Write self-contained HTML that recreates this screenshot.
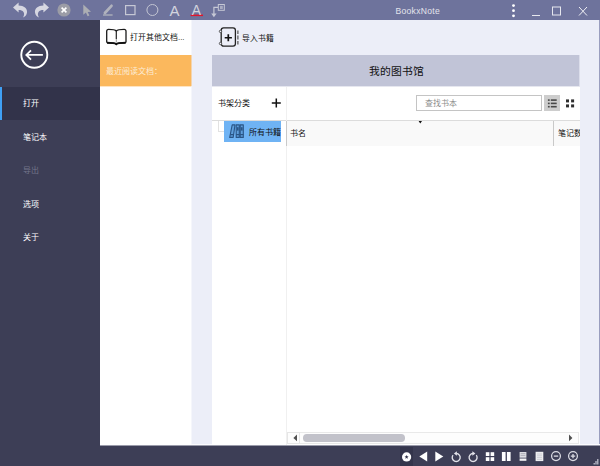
<!DOCTYPE html>
<html lang="zh-CN">
<head>
<meta charset="utf-8">
<title>BookxNote</title>
<style>
html,body{margin:0;padding:0;}
body{width:600px;height:466px;overflow:hidden;position:relative;background:#eceef8;font-family:"Liberation Sans",sans-serif;font-size:8px;color:#111;}
.abs{position:absolute;}
.t{position:absolute;white-space:nowrap;line-height:10px;height:10px;}
#topbar{left:0;top:0;width:600px;height:20px;background:#6e739c;}
#side{left:0;top:20px;width:100px;height:446px;background:#3d3e56;}
#bottom{left:0;top:446px;width:600px;height:20px;background:#3d3e56;}
#sel{left:0;top:87px;width:100px;height:33px;background:#32334a;}
#selbar{left:0;top:87px;width:2px;height:33px;background:#3fa0f5;}
.nav{color:#fff;left:22.5px;}
#panel2{left:100px;top:20px;width:91px;height:426px;background:#fff;}
#orange{left:100px;top:55px;width:91px;height:31px;background:#fbb85d;}
#main{left:212px;top:86px;width:368px;height:360px;background:#fff;}
#hdr{left:212px;top:55px;width:367px;height:31px;background:#c1c4d7;border-right:1px solid #dcdeeb;}
</style>
</head>
<body>
<div id="topbar" class="abs"></div>
<div id="side" class="abs"></div>
<div id="bottom" class="abs"></div>
<div id="sel" class="abs"></div>
<div id="selbar" class="abs"></div>

<div class="abs" style="left:599px;top:20px;width:1px;height:426px;background:#9a9ebf;"></div>
<div class="abs" style="left:100px;top:444.4px;width:500px;height:1.6px;background:#fbfbfe;"></div>
<!-- title bar icons -->
<svg class="abs" style="left:0;top:0" width="600" height="20" viewBox="0 0 600 20">
  <!-- undo -->
  <path d="M13 7.6 L18.6 2.6 L18.6 5.5 C24 5.5 27.5 8.5 27 12.5 C26.7 15 25 16.8 23 17.5 C24.3 15.5 24.5 13.5 23.5 12 C22.5 10.6 20.8 10.1 18.6 10.1 L18.6 12.6 Z" fill="#d6d7e1"/>
  <!-- redo -->
  <path d="M49 7.6 L43.4 2.6 L43.4 5.5 C38 5.5 34.5 8.5 35 12.5 C35.3 15 37 16.8 39 17.5 C37.7 15.5 37.5 13.5 38.5 12 C39.5 10.6 41.2 10.1 43.4 10.1 L43.4 12.6 Z" fill="#d6d7e1"/>
  <!-- close circle -->
  <circle cx="64" cy="10" r="6.6" fill="#9b9ca6"/>
  <path d="M61.6 7.6 L66.4 12.4 M66.4 7.6 L61.6 12.4" stroke="#fff" stroke-width="1.6"/>
  <!-- cursor -->
  <path d="M83.3 4.4 L83.3 14.8 L85.9 12.6 L87.6 16.3 L89.4 15.5 L87.7 12 L91 11.8 Z" fill="#acaeb3"/>
  <!-- pen -->
  <path d="M103 15 L112.6 15" stroke="#a9abb8" stroke-width="1.5"/>
  <path d="M104.9 13 L111.5 5.8" stroke="#b0b2bd" stroke-width="2.7" stroke-linecap="round"/>
  <!-- rect -->
  <rect x="125.6" y="5.6" width="9.4" height="9" fill="none" stroke="#c6c8d5" stroke-width="1.2"/>
  <!-- circle -->
  <circle cx="152.4" cy="10" r="5.5" fill="none" stroke="#c3c5d3" stroke-width="1"/>
  <!-- red underline -->
  <rect x="190.6" y="14.6" width="12.4" height="1.5" fill="#e2142c"/>
  <!-- arrow box -->
  <path d="M213.9 14.5 L213.9 7.3 L218 7.3" fill="none" stroke="#c6c8d5" stroke-width="1.2"/>
  <path d="M211.2 13.4 L213.9 17.2 L216.6 13.4 Z" fill="#c6c8d5"/>
  <rect x="218.3" y="4.5" width="6" height="5.8" fill="none" stroke="#c6c8d5" stroke-width="1"/>
  <rect x="220" y="5.8" width="2.8" height="3.2" fill="#a9acc2"/>
  <!-- kebab -->
  <circle cx="513.5" cy="5.6" r="1.4" fill="#fff"/>
  <circle cx="513.5" cy="10.7" r="1.4" fill="#fff"/>
  <circle cx="513.5" cy="15.8" r="1.4" fill="#fff"/>
  <!-- min -->
  <rect x="532" y="15" width="8" height="1" fill="#e6e7ee"/>
  <!-- max -->
  <rect x="552.5" y="7" width="8" height="8" fill="none" stroke="#e6e7ee" stroke-width="1"/>
  <!-- close -->
  <path d="M579 7 L587 15.5 M587 7 L579 15.5" stroke="#f0f0f5" stroke-width="1"/>
</svg>
<div class="t" style="left:169.4px;top:3px;font-size:15px;line-height:16px;height:16px;color:#d3d4de;">A</div>
<div class="t" style="left:191.8px;top:4.2px;font-size:13.8px;line-height:14px;height:14px;color:#d3d4de;">A</div>
<div class="t" style="left:395.5px;top:5.5px;font-size:8.6px;letter-spacing:0.27px;color:#e3e4ec;">BookxNote</div>

<!-- sidebar -->
<svg class="abs" style="left:18px;top:38px" width="34" height="34" viewBox="0 0 34 34">
  <circle cx="16.3" cy="16.8" r="13" fill="none" stroke="#fff" stroke-width="1.9"/>
  <path d="M8.4 16.9 L24.9 16.9 M13 12.3 L8.3 16.9 L13 21.6" fill="none" stroke="#fff" stroke-width="1.8"/>
</svg>
<div class="t nav" style="top:99.4px;">打开</div>
<div class="t nav" style="top:133px;">笔记本</div>
<div class="t nav" style="top:166px;color:#74758b;">导出</div>
<div class="t nav" style="top:199.5px;">选项</div>
<div class="t nav" style="top:233px;">关于</div>

<!-- panel 2 -->
<div id="panel2" class="abs"></div>
<div id="orange" class="abs"></div>
<svg class="abs" style="left:104px;top:27px" width="26" height="20" viewBox="0 0 26 20">
  <path d="M12.3 4 C11 2.5 9 2.4 4.6 2.4 Q2.7 2.4 2.7 4.2 L2.7 14.8 Q2.7 15.9 4 15.9 C8 15.9 11 15.9 12.3 17.2 C13.6 15.9 16.6 15.9 20.6 15.9 Q22 15.9 22 14.8 L22 4.2 Q22 2.4 20.1 2.4 C15.6 2.4 13.6 2.5 12.3 4 Z" fill="none" stroke="#1a1a1a" stroke-width="1.3" stroke-linejoin="round"/>
  <path d="M3 15.7 C8 15.7 11 15.7 12.3 17.1 C13.6 15.7 16.6 15.7 21.7 15.7" fill="none" stroke="#111" stroke-width="1.9"/>
  <path d="M12.3 4 L12.3 12" stroke="#222" stroke-width="1.2"/>
  <path d="M12.3 12 L12.3 15.5" stroke="#999" stroke-width="1"/>
</svg>
<div class="t" style="left:130px;top:33.2px;font-size:7.85px;">打开其他文档...</div>
<div class="t" style="left:105.7px;top:66.6px;color:#fbecd6;">最近阅读文档：</div>

<div class="abs" style="left:191px;top:20px;width:1px;height:424px;background:#f5f6fb;"></div>
<div class="abs" style="left:191px;top:55px;width:1px;height:31px;background:#f4d4ad;"></div>
<div class="abs" style="left:100px;top:86px;width:91px;height:1px;background:#fee4c2;"></div>
<div class="abs" style="left:191px;top:86px;width:1px;height:1px;background:#f6f0ea;"></div>
<!-- main -->
<div id="hdr" class="abs"></div>
<div id="main" class="abs"></div>
<div class="abs" style="left:212px;top:86px;width:367.6px;height:1px;background:#e6e7ef;"></div>
<div class="t" style="left:369.2px;top:64px;font-size:10.75px;line-height:14px;height:14px;color:#111;">我的图书馆</div>

<svg class="abs" style="left:216px;top:25px" width="26" height="26" viewBox="0 0 26 26">
  <rect x="5.2" y="2.8" width="14.2" height="18.4" rx="2.4" fill="none" stroke="#222" stroke-width="1.3"/>
  <path d="M12.3 9.2 L12.3 16.3 M8.7 12.75 L15.9 12.75" stroke="#111" stroke-width="1.7"/>
  <path d="M21.9 5.4 L21.9 9 M21.9 10.6 L21.9 14.4 M21.9 16 L21.9 19.4" stroke="#444" stroke-width="1.1"/>
  <circle cx="4.5" cy="6.4" r="1.2" fill="#eceef8" stroke="#333" stroke-width="0.8"/>
  <circle cx="4.5" cy="18.5" r="1.2" fill="#eceef8" stroke="#333" stroke-width="0.8"/>
</svg>
<div class="t" style="left:242.3px;top:34.2px;font-size:7.8px;">导入书籍</div>

<div class="t" style="left:217.9px;top:99.4px;">书架分类</div>
<svg class="abs" style="left:269.8px;top:97.2px" width="12" height="12" viewBox="0 0 12 12">
  <path d="M6.3 1.5 L6.3 10.5 M1.8 6 L10.8 6" stroke="#111" stroke-width="1.5"/>
</svg>

<!-- search -->
<div class="abs" style="left:416px;top:95px;width:126px;height:16px;border:1px solid #c4c4c4;box-sizing:border-box;background:#fff;"></div>
<div class="t" style="left:425px;top:99.2px;color:#8c8c8c;">查找书本</div>
<div class="abs" style="left:544px;top:95px;width:16px;height:16px;background:#cdcdcd;"></div>
<svg class="abs" style="left:544px;top:95px" width="34" height="16" viewBox="0 0 34 16">
  <g fill="#484848">
  <rect x="3.9" y="4.3" width="1.8" height="1.6"/><rect x="6.8" y="4.3" width="5.9" height="1.6"/>
  <rect x="3.9" y="7.6" width="1.8" height="1.6"/><rect x="6.8" y="7.6" width="5.9" height="1.6"/>
  <rect x="3.9" y="10.9" width="1.8" height="1.6"/><rect x="6.8" y="10.9" width="5.9" height="1.6"/>
  </g>
  <g fill="#2e2e2e">
  <rect x="22" y="4.4" width="3" height="3"/><rect x="27.1" y="4.4" width="3" height="3"/>
  <rect x="22" y="9.4" width="3" height="3"/><rect x="27.1" y="9.4" width="3" height="3"/>
  </g>
</svg>

<!-- table -->
<div class="abs" style="left:287px;top:120.5px;width:293px;height:25px;background:#f9f9f9;"></div>
<div class="abs" style="left:212px;top:120px;width:368px;height:1px;background:#dcdcdc;"></div>
<div class="abs" style="left:285.5px;top:87px;width:1px;height:359px;background:#f0f0f0;"></div>
<div class="abs" style="left:286px;top:121px;width:1.3px;height:24.5px;background:#c9c9c9;"></div>
<div class="abs" style="left:553px;top:121px;width:1.3px;height:24.5px;background:#c9c9c9;"></div>
<div class="t" style="left:290.3px;top:129.2px;">书名</div>
<div class="abs" style="left:557.5px;top:129.4px;width:22.3px;height:10px;overflow:hidden;"><div class="t" style="left:0;top:0;">笔记数</div></div>
<svg class="abs" style="left:418px;top:121px" width="6" height="4" viewBox="0 0 6 4"><path d="M0.6 0 L4 0 L2.3 2.4 Z" fill="#111"/></svg>

<!-- tree -->
<div class="abs" style="left:218px;top:121px;width:1px;height:10.5px;background:#e2e2e2;"></div>
<div class="abs" style="left:218px;top:131px;width:6px;height:1px;background:#e2e2e2;"></div>
<div class="abs" style="left:223.7px;top:120.6px;width:57px;height:21.1px;background:#6fb3f4;overflow:hidden;">
  <div class="t" style="left:25px;top:7.2px;color:#111;">所有书籍</div>
</div>
<svg class="abs" style="left:229px;top:123px" width="16" height="16" viewBox="0 0 16 16">
  <g fill="#5f9fdc" stroke="#2a5586" stroke-width="1.1" stroke-linejoin="round">
   <path d="M0.7 14.4 L3.2 1.9 L6 1.9 L4.2 14.4 Z"/>
   <rect x="7.2" y="1.9" width="3.1" height="12.5"/>
   <rect x="11.2" y="1.9" width="3.1" height="12.5"/>
  </g>
  <g fill="#2a5586">
   <rect x="7.9" y="4.2" width="1.7" height="3.4"/><rect x="11.9" y="4.2" width="1.7" height="3.4"/>
   <rect x="7.2" y="11" width="3.1" height="1.2"/><rect x="11.2" y="11" width="3.1" height="1.2"/>
   <path d="M1.4 11 L4.6 11 L4.4 12.2 L1.2 12.2 Z"/>
  </g>
</svg>

<!-- scrollbar -->
<div class="abs" style="left:287px;top:431.5px;width:292px;height:12.5px;background:#fdfdfd;border:1px solid #e9e9e9;box-sizing:border-box;"></div>
<div class="abs" style="left:303.4px;top:434px;width:101.6px;height:7.6px;border-radius:3.8px;background:#c2c2ca;"></div>
<svg class="abs" style="left:287px;top:432px" width="292" height="12" viewBox="0 0 292 12">
  <path d="M10 2.6 L10 9.2 L6.4 5.9 Z" fill="#505050"/>
  <path d="M282 2.6 L282 9.2 L285.4 5.9 Z" fill="#505050"/>
</svg>
<div class="abs" style="left:287px;top:431.5px;width:12.5px;height:12.5px;border:1px solid #e6e6e6;box-sizing:border-box;"></div>

<div class="abs" style="left:100px;top:445px;width:500px;height:1px;background:#9a9baa;"></div>
<!-- bottom bar icons -->
<div class="abs" style="left:400.2px;top:447px;width:12.7px;height:19px;background:#34354c;"></div>
<svg class="abs" style="left:380px;top:446px" width="220" height="20" viewBox="0 0 220 20">
  <circle cx="26.6" cy="10.9" r="4.6" fill="#fff"/>
  <path d="M26.6 8.9 L27.2 10.3 L28.7 10.4 L27.5 11.3 L27.9 12.8 L26.6 12 L25.3 12.8 L25.7 11.3 L24.5 10.4 L26 10.3 Z" fill="#34354c"/>
  <path d="M47.2 5.6 L47.2 15.4 L39.3 10.5 Z" fill="#fff"/>
  <path d="M55.3 5.6 L55.3 15.4 L63.3 10.5 Z" fill="#fff"/>
  <g fill="none" stroke="#e3e3ea" stroke-width="1.35">
   <path d="M73 9.1 A4 4 0 1 0 76.3 7.5"/>
   <path d="M96.3 9.1 A4 4 0 1 1 93 7.5"/>
  </g>
  <path d="M76.9 5.3 L76.9 9.7 L73.9 7.5 Z" fill="#e3e3ea"/>
  <path d="M92.4 5.3 L92.4 9.7 L95.4 7.5 Z" fill="#e3e3ea"/>
  <g fill="#fff">
   <rect x="105.8" y="6.2" width="3.6" height="3.8"/><rect x="110.6" y="6.2" width="3.6" height="3.8"/>
   <rect x="105.8" y="11.2" width="3.6" height="3.8"/><rect x="110.6" y="11.2" width="3.6" height="3.8"/>
   <rect x="121.9" y="6" width="3.7" height="9"/><rect x="126.9" y="6" width="3.7" height="9"/>
  </g>
  <rect x="139.6" y="6" width="6.8" height="5.7" fill="#dcdce2"/>
  <rect x="139.6" y="12.5" width="6.8" height="2.3" fill="#f4f4f6"/>
  <path d="M140.6 7.6 L145.4 7.6 M140.6 9.4 L145.4 9.4" stroke="#9d9eaa" stroke-width="0.7"/>
  <rect x="155.6" y="5.8" width="7.7" height="9.3" fill="#ededf0"/>
  <path d="M157 8 L162 8 M157 9.8 L162 9.8 M157 11.6 L162 11.6 M157 13.4 L162 13.4" stroke="#b9bac4" stroke-width="0.6"/>
  <circle cx="176" cy="10.1" r="4.4" fill="none" stroke="#dcdce4" stroke-width="1.25"/>
  <path d="M173.8 10.1 L178.2 10.1" stroke="#dcdce4" stroke-width="1.3"/>
  <circle cx="193" cy="10.1" r="4.4" fill="none" stroke="#dcdce4" stroke-width="1.25"/>
  <path d="M190.8 10.1 L195.2 10.1 M193 7.9 L193 12.3" stroke="#dcdce4" stroke-width="1.3"/>
  <g fill="#c4c5d2">
   <rect x="217.2" y="13" width="1.2" height="5.5"/><rect x="215.4" y="15" width="1.2" height="3.5"/><rect x="213.6" y="17" width="1.2" height="1.5"/>
  </g>
</svg>
</body>
</html>
